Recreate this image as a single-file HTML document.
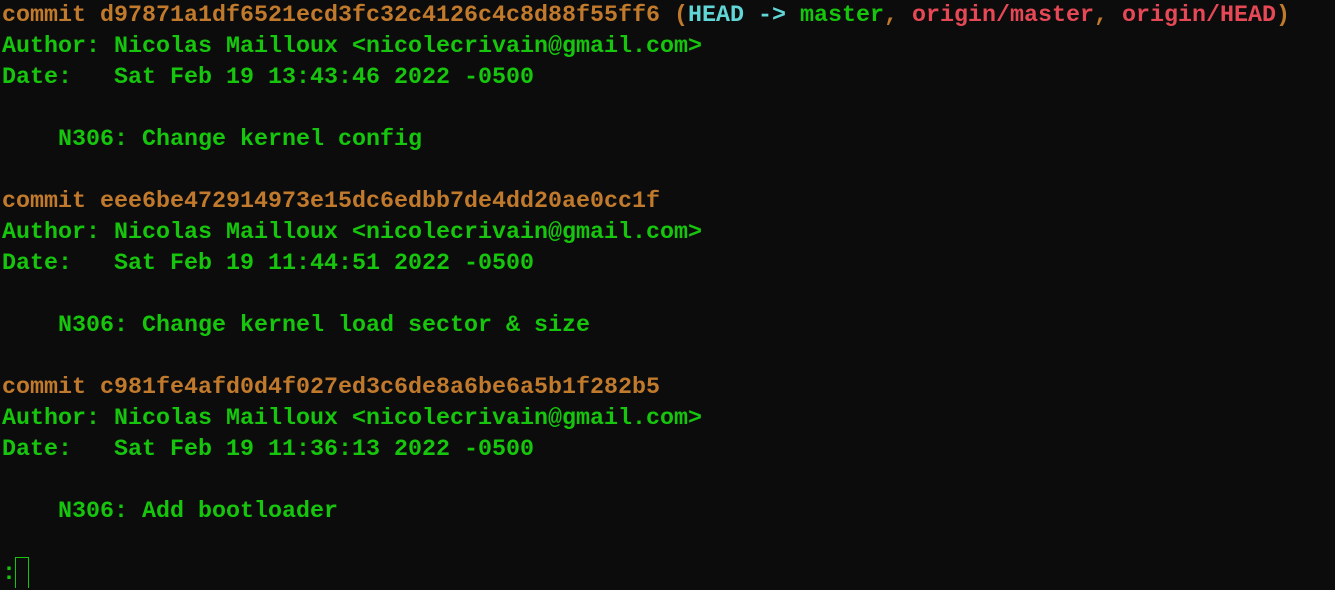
<!DOCTYPE html>
<html><head><style>
body{margin:0;background:#0c0c0c;width:1335px;height:582px;overflow:hidden}
pre{margin:0;position:absolute;left:2px;top:1px;font-family:"Liberation Mono",monospace;font-weight:bold;font-size:23.33px;line-height:31px;color:#16c60c;white-space:pre}
.o{color:#c17a2c}.c{color:#61d6d6}.r{color:#e74856}
.cur{position:absolute;left:15px;top:557px;width:12px;height:30px;border:1px solid #16c60c;border-bottom:none}
</style></head><body>
<pre><span class="o">commit d97871a1df6521ecd3fc32c4126c4c8d88f55ff6 (</span><span class="c">HEAD -&gt; </span>master<span class="o">, </span><span class="r">origin/master</span><span class="o">, </span><span class="r">origin/HEAD</span><span class="o">)</span>
Author: Nicolas Mailloux &lt;nicolecrivain@gmail.com&gt;
Date:   Sat Feb 19 13:43:46 2022 -0500

    N306: Change kernel config

<span class="o">commit eee6be472914973e15dc6edbb7de4dd20ae0cc1f</span>
Author: Nicolas Mailloux &lt;nicolecrivain@gmail.com&gt;
Date:   Sat Feb 19 11:44:51 2022 -0500

    N306: Change kernel load sector &amp; size

<span class="o">commit c981fe4afd0d4f027ed3c6de8a6be6a5b1f282b5</span>
Author: Nicolas Mailloux &lt;nicolecrivain@gmail.com&gt;
Date:   Sat Feb 19 11:36:13 2022 -0500

    N306: Add bootloader

:</pre>
<div class="cur"></div>
</body></html>
